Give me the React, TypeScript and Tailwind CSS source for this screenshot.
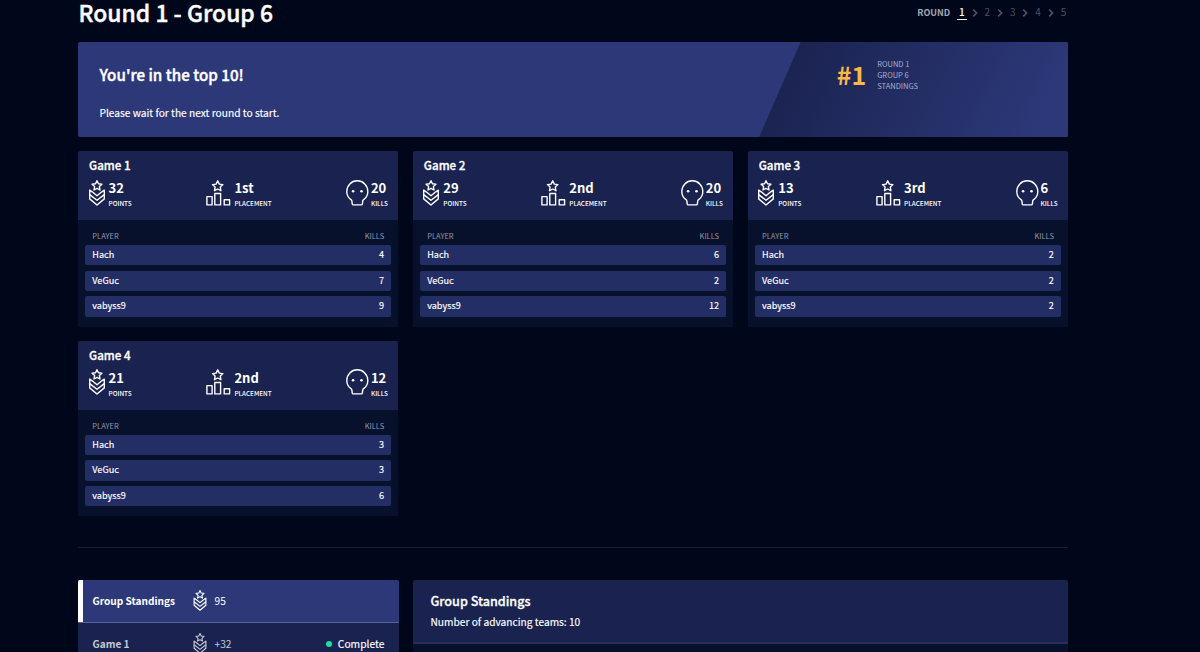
import React from 'react';
import { clsx } from 'clsx';

interface Game {
    name: string;
    points: number;
    placement: string;
    kills: number;
    players: [string, number][];
}

const games: Game[] = [
    { name: 'Game 1', points: 32, placement: '1st', kills: 20, players: [['Hach', 4], ['VeGuc', 7], ['vabyss9', 9]] },
    { name: 'Game 2', points: 29, placement: '2nd', kills: 20, players: [['Hach', 6], ['VeGuc', 2], ['vabyss9', 12]] },
    { name: 'Game 3', points: 13, placement: '3rd', kills: 6, players: [['Hach', 2], ['VeGuc', 2], ['vabyss9', 2]] },
    { name: 'Game 4', points: 21, placement: '2nd', kills: 12, players: [['Hach', 3], ['VeGuc', 3], ['vabyss9', 6]] },
];

function PointsIcon({ className }: { className?: string }) {
    return (
        <svg viewBox="0 0 16 26" fill="none" stroke="currentColor" strokeWidth="1.4" strokeLinejoin="round" className={className}>
            <path d="M8 .7l1.5 3 3.4.5-2.5 2.4.6 3.4-3-1.6-3 1.6.6-3.4-2.5-2.4 3.4-.5z" />
            <path d="M3.2 11.8L.7 10.1v8.8L8 25l7.3-6.1v-8.8l-2.5 1.7L8 15.7z" />
            <path d="M.7 14.6L8 20.3l7.3-5.7" />
        </svg>
    );
}

function PlacementIcon() {
    return (
        <svg viewBox="0 0 25 26" fill="none" stroke="currentColor" strokeWidth="1.4" strokeLinejoin="round" className="mt-[0.5px] h-[26px] w-[25px]">
            <path d="M11.7.8l1.6 3.3 3.6.5-2.6 2.5.6 3.6-3.2-1.7-3.2 1.7.6-3.6-2.6-2.5 3.6-.5z" />
            <path d="M.9 16.6h5.2v8.3H.9zM8.8 13.5h5.8v11.4H8.8zM18.2 19.8h5.4v5.1h-5.4z" />
        </svg>
    );
}

function SkullIcon() {
    return (
        <svg viewBox="0 0 23 26" fill="none" stroke="currentColor" strokeWidth="1.4" strokeLinejoin="round" className="mt-[0.5px] h-[26px] w-[23px]">
            <path d="M7.4 24.9c-.7 0-1.1-.4-1.2-1.1l-.3-2.6c-.1-.9-.5-1.3-1.2-1.8C2.200 17.500.8 14.600.8 11.400.8 5.500 5.400.8 11.300.8s10.500 4.700 10.500 10.600c0 3.200-1.400 6.100-3.900 8-.7.5-1.100.9-1.200 1.800l-.3 2.600c-.1.7-.5 1.100-1.200 1.100z" />
            <circle cx="7.100" cy="11.2" r="1.300" fill="currentColor" stroke="none" />
            <circle cx="15.500" cy="11.2" r="1.300" fill="currentColor" stroke="none" />
        </svg>
    );
}

function Stat({ icon, value, label, className }: { icon: React.ReactNode; value: React.ReactNode; label: string; className?: string }) {
    return (
        <div className={clsx('flex', className)}>
            {icon}
            <div>
                <div className="mt-[2px] text-[13px] leading-[14px] font-bold">{value}</div>
                <div className="mt-[3px] text-[6.4px] leading-[12px] font-medium">{label}</div>
            </div>
        </div>
    );
}

function GameCard({ game }: { game: Game }) {
    return (
        <div className="h-[175.5px] overflow-hidden rounded-t-[2px] bg-[#07112c]">
            <div className="h-[69px] bg-[#1a2350] px-[10.5px] pt-[6px]">
                <div className="pl-[0.5px] text-[11.6px] leading-[16px] font-medium [-webkit-text-stroke:0.3px]">{game.name}</div>
                <div className="mt-[6px] flex justify-between">
                    <Stat className="gap-1" icon={<PointsIcon className="mt-[0.5px] h-[26px] w-4" />} value={game.points} label="POINTS" />
                    <Stat className="gap-[3.5px]" icon={<PlacementIcon />} value={game.placement} label="PLACEMENT" />
                    <Stat className="gap-[2px]" icon={<SkullIcon />} value={game.kills} label="KILLS" />
                </div>
            </div>
            <div className="px-[7px] pt-[9px]">
                <div className="flex justify-between px-[7.3px] text-[7.5px] leading-[14px] text-[#9498a8]">
                    <span>PLAYER</span>
                    <span>KILLS</span>
                </div>
                <div className="mt-[2px] flex flex-col gap-[5.5px]">
                    {game.players.map(([name, kills]) => (
                        <div
                            key={name}
                            className="flex h-[20.2px] justify-between rounded-[2px] bg-[#232e65] px-[7.3px] text-[9.1px] leading-[19px] [-webkit-text-stroke:0.15px]"
                        >
                            <span>{name}</span>
                            <span>{kills}</span>
                        </div>
                    ))}
                </div>
            </div>
        </div>
    );
}

function RoundNav() {
    return (
        <div className="flex items-center text-[10px] leading-[14px]">
            <span className="mr-[7px] text-[9px] font-bold text-[#a5a8b2]">ROUND</span>
            {[1, 2, 3, 4, 5].map((n) => (
                <React.Fragment key={n}>
                    {n > 1 && (
                        <svg viewBox="0 0 6 8" fill="none" stroke="#4e5463" strokeWidth="1.6" className="mx-[5px] h-2 w-[6px]">
                            <path d="M1.2.6L4.6 4 1.2 7.4" />
                        </svg>
                    )}
                    <span
                        className={clsx(
                            'w-[9.4px] border-b text-center',
                            n === 1 ? 'border-white font-medium text-white' : 'border-transparent text-[#4b5160]',
                        )}
                    >
                        {n}
                    </span>
                </React.Fragment>
            ))}
        </div>
    );
}

export default function App() {
    return (
        <div className="h-[652px] w-[1200px] overflow-hidden bg-[#01071a] pl-[78px] font-['Noto_Sans_CJK_SC',sans-serif] text-white">
            <div className="w-[990.2px]">
                <header className="flex h-[42px] justify-between">
                    <h1 className="pl-[0.5px] text-[22.9px] leading-6 font-medium [-webkit-text-stroke:0.4px]">Round 1 - Group 6</h1>
                    <div className="pt-[5px]">
                        <RoundNav />
                    </div>
                </header>

                {/* Result banner */}
                <section className="flex h-[95px] justify-between overflow-hidden rounded-[2px] bg-[#2c3878]">
                    <div className="pt-[21px] pl-[21.5px]">
                        <h2 className="text-[15.2px] leading-[22px] font-medium [-webkit-text-stroke:0.4px]">You're in the top 10!</h2>
                        <p className="mt-5 text-[10.2px] leading-4 [-webkit-text-stroke:0.15px]">Please wait for the next round to start.</p>
                    </div>
                    <div className="flex w-[309px] bg-linear-[115deg,#1a2350_10%,#2c3878_90%] pl-[77.5px] [clip-path:polygon(41.5px_0,100%_0,100%_100%,0_100%)]">
                        <div className="pt-4 text-[25px] leading-8 font-bold text-[#ffb74a]">#1</div>
                        <div className="pt-4 pl-[11px] text-[7.5px] leading-[11px] text-[#a9aec9]">
                            <div>ROUND 1</div>
                            <div>GROUP 6</div>
                            <div>STANDINGS</div>
                        </div>
                    </div>
                </section>

                <section className="mt-[14px] grid grid-cols-3 gap-x-[14.4px] gap-y-[14.2px]">
                    {games.map((game) => (
                        <GameCard key={game.name} game={game} />
                    ))}
                </section>

                <hr className="mt-[30.8px] border-[#1a2030]" />

                {/* Standings */}
                <section className="mt-8 flex gap-[14.5px]">
                    <aside className="w-[320.5px] overflow-hidden rounded-t-[2px]">
                        <div className="flex h-[43px] items-center border-b bg-[#2c3878] border-[#56609a]">
                            <div className="h-full w-[5px] bg-white" />
                            <span className="ml-[9.5px] w-[100px] text-[10.1px] font-bold">Group Standings</span>
                            <PointsIcon className="h-[21px] w-[14px]" />
                            <span className="ml-2 text-[10.2px]">95</span>
                        </div>
                        <div className="flex h-[42px] items-center bg-[#1a2350] pr-[14px] pl-[14.5px] text-[#c6c8d5]">
                            <span className="w-[100px] text-[10.1px] font-bold">Game 1</span>
                            <PointsIcon className="h-[21px] w-[14px]" />
                            <span className="ml-2 text-[10.2px]">+32</span>
                            <span className="ml-auto size-[6px] rounded-full bg-[#17e0a0]" />
                            <span className="ml-[6px] text-[10.3px] text-white [-webkit-text-stroke:0.15px]">Complete</span>
                        </div>
                    </aside>
                    <div className="h-[120px] flex-1 overflow-hidden rounded-t-[2px] bg-[#07112c]">
                        <div className="h-16 border-b-2 border-[#262f5c] bg-[#1a2350] px-[17.5px] pt-[12px]">
                            <h3 className="text-[12.6px] leading-[18px] font-medium [-webkit-text-stroke:0.3px]">Group Standings</h3>
                            <p className="mt-1 text-[10.2px] leading-4 [-webkit-text-stroke:0.15px]">Number of advancing teams: 10</p>
                        </div>
                    </div>
                </section>
            </div>
        </div>
    );
}
